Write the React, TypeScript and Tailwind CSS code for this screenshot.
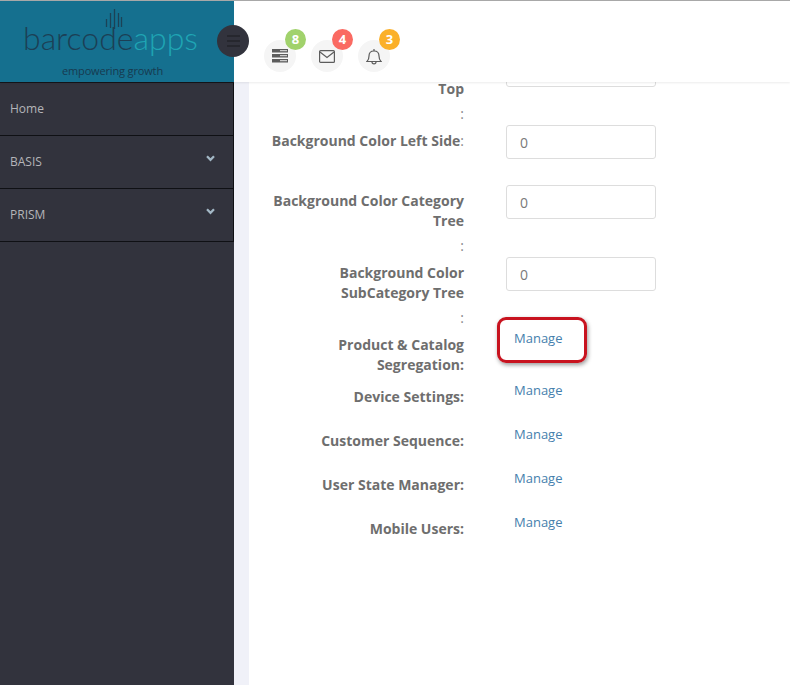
const font = { fontFamily: '"Open Sans", sans-serif' };

function Chevron() {
  return (
    <svg width="9" height="7" viewBox="0 0 10 8" className="mb-[7px] mr-[18px]">
      <path d="M1 1.5 L5 5.5 L9 1.5" fill="none" stroke="#a3b8c6" strokeWidth="2.6" />
    </svg>
  );
}

function NavItem({ label, chevron }: { label: string; chevron?: boolean }) {
  return (
    <div className="h-[53px] border-b border-r border-[#0f1014] flex items-center justify-between pl-[10px]">
      <span className="text-[12px] text-[#b4b5b9]">{label}</span>
      {chevron && <Chevron />}
    </div>
  );
}

function IconBubble({ badge, color, children }: { badge: string; color: string; children: React.ReactNode }) {
  return (
    <div className="relative w-[32px] h-[32px] rounded-full bg-[#f5f5f5] flex items-center justify-center">
      {children}
      <span
        className={`absolute -top-[11px] left-[21px] w-[21px] h-[21px] rounded-full flex items-center justify-center text-white text-[13px] font-bold ${color}`}
      >
        {badge}
      </span>
    </div>
  );
}

function Field({ label, value, note }: { label: React.ReactNode; value: string; note?: boolean }) {
  return (
    <div className={`flex ${note ? "h-[60px]" : "h-[72px]"}`}>
      <div className="w-[195px] pt-[6px] text-right text-[14px] leading-[20px] font-bold text-[#6e6e6e]">{label}</div>
      <div className="ml-[42px] w-[150px] h-[34px] border border-[#dddddd] rounded-[3px] bg-white flex items-center pl-[13px] text-[14px] text-[#7a7a7a]">
        {value}
      </div>
    </div>
  );
}

function Colon() {
  return <div className="mt-[5px] font-normal text-[#8a8a8a]">:</div>;
}

function ManageRow({ label, height, marked }: { label: React.ReactNode; height: string; marked?: boolean }) {
  return (
    <div className={`flex ${height}`}>
      <div className="w-[195px] pt-[6px] text-right text-[14px] leading-[20px] font-bold text-[#6e6e6e]">{label}</div>
      <div className="relative ml-[42px] pl-[8px] text-[13px] leading-[18px] text-[#4580ad]">
        Manage
        {marked && (
          <div className="absolute -left-[9px] -top-[12px] w-[90px] h-[46px] rounded-[9px] border-[3px] border-[#c8131f] shadow-[1px_2px_4px_rgba(0,0,0,0.4)]" />
        )}
      </div>
    </div>
  );
}

export default function App() {
  return (
    <div className="w-[790px] h-[685px] overflow-hidden flex flex-col bg-white border-t border-[#a8a8a8]" style={font}>
      <header className="relative z-10 h-[81px] flex bg-white shadow-[0_1px_2px_rgba(0,0,0,0.08)]">
        <div className="relative w-[234px] bg-[#15708f] flex flex-col">
          <svg width="18" height="21" viewBox="0 0 18 21" className="absolute left-[105px] top-[7px]">
            <g stroke="#1c4256" strokeWidth="1.3">
              <path d="M1.5 11V19M5.5 5V20M9.5 1V21M13.5 5V19M16.5 9V19" />
            </g>
          </svg>
          <div className="ml-[23px] mt-[16px] h-[42px] text-[32px] leading-[42px] font-light whitespace-nowrap" style={{ fontFamily: '"Lato", sans-serif' }}>
            <span className="text-[#1c3f55]">barcode</span>
            <span className="text-[#1fa5b4]">apps</span>
          </div>
          <div className="ml-[62px] mt-[5px] text-[11px] leading-[14px] tracking-[-0.15px] text-[#173a50]">empowering growth</div>
          <button className="absolute left-[217px] top-[24px] w-[32px] h-[32px] rounded-full bg-[#32333d] flex flex-col items-center justify-center gap-[3px]">
            <span className="block w-[13px] h-[2px] bg-[#26272e]" />
            <span className="block w-[13px] h-[2px] bg-[#26272e]" />
            <span className="block w-[13px] h-[2px] bg-[#26272e]" />
          </button>
        </div>
        <div className="flex gap-[15px] pl-[30px] pt-[39px]">
          <IconBubble badge="8" color="bg-[#a1d26c]">
            <svg width="16" height="14" viewBox="0 0 16 14">
              <path d="M0 0H16V3.5H0ZM0 5H16V8.5H0ZM0 10H16V13.5H0Z" fill="#5c5c5c" />
              <path d="M8 1.7H15M8 6.7H15M8 11.7H15" stroke="#f5f5f5" strokeWidth="0.9" />
            </svg>
          </IconBubble>
          <IconBubble badge="4" color="bg-[#fa6a62]">
            <svg width="16" height="13" viewBox="0 0 16 13" fill="none" stroke="#5c5c5c" strokeWidth="1.2">
              <rect x="0.6" y="0.6" width="14.8" height="11.8" rx="1" />
              <path d="M1 2L8 7.5L15 2" />
            </svg>
          </IconBubble>
          <IconBubble badge="3" color="bg-[#fbb02a]">
            <svg width="16" height="17" viewBox="0 0 16 17" fill="none" stroke="#5c5c5c" strokeWidth="1.2">
              <path d="M1 13.5H15C13.4 12 13 10.5 13 8C13 5 11 3 8 3C5 3 3 5 3 8C3 10.5 2.6 12 1 13.5Z" />
              <path d="M8 3V1M6 14C6 16.5 10 16.5 10 14" />
            </svg>
          </IconBubble>
        </div>
      </header>
      <div className="flex-1 flex min-h-0">
        <aside className="w-[234px] bg-[#32333d] border-t border-[#15161a]">
          <NavItem label="Home" />
          <NavItem label="BASIS" chevron />
          <NavItem label="PRISM" chevron />
        </aside>
        <div className="w-[15px] bg-[#f0f1f8]" />
        <main className="flex-1 overflow-hidden pl-[20px]">
          <div className="-mt-[29px]">
            <Field value="" label={<><div className="h-[20px]" />Top<Colon /></>} />
            <Field note value="0" label={<>Background Color Left Side<span className="font-normal text-[#8a8a8a]">:</span></>} />
            <Field value="0" label={<>Background Color Category Tree<Colon /></>} />
            <Field value="0" label={<>Background Color SubCategory Tree<Colon /></>} />
            <ManageRow marked height="h-[52px]" label="Product & Catalog Segregation:" />
            <ManageRow height="h-[44px]" label="Device Settings:" />
            <ManageRow height="h-[44px]" label="Customer Sequence:" />
            <ManageRow height="h-[44px]" label="User State Manager:" />
            <ManageRow height="h-[44px]" label="Mobile Users:" />
          </div>
        </main>
      </div>
    </div>
  );
}
